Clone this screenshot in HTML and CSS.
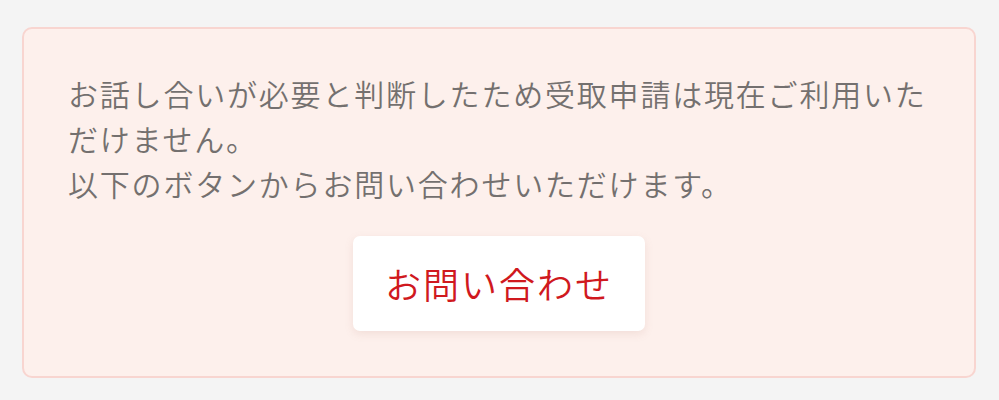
FILE: index.html
```html
<!DOCTYPE html>
<html lang="ja">
<head>
    <meta charset="UTF-8">
    <meta name="viewport" content="width=device-width, initial-scale=1.0">
    <title>お問い合わせ</title>
    <link rel="stylesheet" href="styles.css">
</head>
<body>
    <div class="notice">
        <p class="notice-text">お話し合いが必要と判断したため受取申請は現在ご利用いただけません。<br>以下のボタンからお問い合わせいただけます。</p>
        <div class="notice-actions">
            <a class="contact-button" href="#">お問い合わせ</a>
        </div>
    </div>
</body>
</html>
```

FILE: styles.css
```css
body {
    margin: 0;
    padding: 27px 23px 0 22px;
    background: #f4f4f4;
    font-family: "Noto Sans CJK JP", "Noto Sans", sans-serif;
    font-weight: 350;
}
.notice {
    box-sizing: border-box;
    height: 351px;
    padding: 42px 44px 0 44px;
    background: #fdf0ec;
    border: 2px solid #f8d5d0;
    border-radius: 10px;
}
.notice-text {
    margin: 0;
    font-size: 30px;
    line-height: 45px;
    letter-spacing: 1.8px;
    color: #74706f;
}
.notice-actions {
    display: flex;
    justify-content: center;
    margin-top: 30px;
}
.contact-button {
    display: block;
    width: 292px;
    box-sizing: border-box;
    padding: 20px 0 21px;
    text-align: center;
    background: #fff;
    border-radius: 7px;
    box-shadow: 0 3px 8px rgba(180, 120, 110, 0.15);
    color: #d0191e;
    font-size: 36px;
    line-height: 54px;
    letter-spacing: 2px;
    text-decoration: none;
}
```
